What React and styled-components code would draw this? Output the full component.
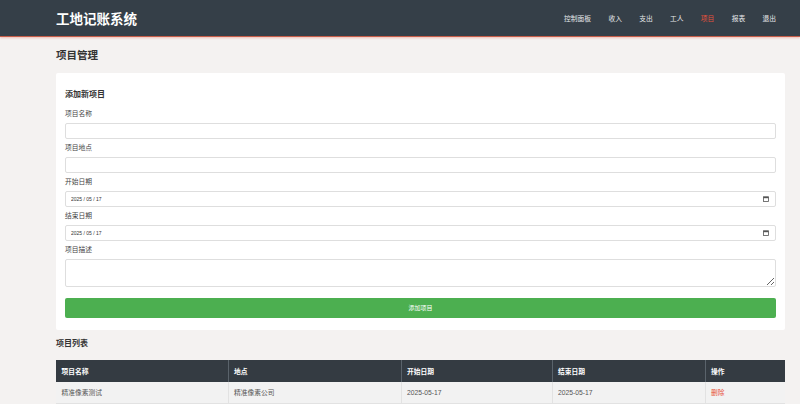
import React from 'react';
import styled, { createGlobalStyle } from 'styled-components';

const GlobalStyle = createGlobalStyle`
  html, body {
    margin: 0;
    padding: 0;
    background: #f4f2f1;
    font-family: "Liberation Sans", "Noto Sans CJK SC", sans-serif;
    color: #333;
  }
  * { box-sizing: border-box; }
`;

const NAV_ITEMS = ['控制面板', '收入', '支出', '工人', '项目', '报表', '退出'];

const COLUMNS = [
  { title: '项目名称', width: 172 },
  { title: '地点', width: 173 },
  { title: '开始日期', width: 151 },
  { title: '结束日期', width: 153 },
  { title: '操作', width: 80 },
];

const projects = [
  { name: '精准像素测试', place: '精准像素公司', start: '2025-05-17', end: '2025-05-17' },
];

// header
const TopBar = styled.header`
  height: 37px;
  background: #353f48;
  border-bottom: 1px solid #c55d48;
  box-shadow: 0 1px 2px rgba(231, 90, 70, 0.35);
  display: flex;
  align-items: center;
  justify-content: space-between;
  padding: 0 24px 0 56px;
`;

const Brand = styled.h1`
  margin: 0;
  font-size: 13.5px;
  font-weight: bold;
  color: #fff;
`;

const Nav = styled.nav`
  display: flex;
  gap: 17.3px;
`;

const NavLink = styled.a`
  font-size: 6.75px;
  color: ${(p) => (p.$active ? '#e8523c' : '#e6e8ea')};
  text-decoration: none;
`;

// page body
const Main = styled.main`
  width: 785px;
  padding: 12px 0 0 56px;
`;

const PageTitle = styled.h2`
  margin: 0 0 11px;
  font-size: 10.5px;
  line-height: 13px;
  font-weight: bold;
  color: #333;
`;

const Card = styled.section`
  background: #fff;
  padding: 17px 9px 12px;
  border-radius: 2px;
`;

const CardTitle = styled.h3`
  margin: 0 0 9px;
  font-size: 8px;
  line-height: 10px;
  font-weight: bold;
  color: #333;
`;

const Field = styled.div`
  margin-bottom: 4.5px;
`;

const Label = styled.label`
  display: block;
  font-size: 6.75px;
  line-height: 9px;
  margin-bottom: 4.5px;
  color: #444;
`;

const TextInput = styled.input`
  display: block;
  width: 100%;
  height: 16px;
  border: 1px solid #dedede;
  border-radius: 2px;
  background: #fff;
  padding: 0 5px;
  font-size: 5px;
  font-family: inherit;
  color: #333;
  outline: none;
`;

const DateBox = styled.div`
  position: relative;
`;

const CalendarIcon = styled.svg`
  position: absolute;
  right: 7px;
  top: 5px;
  width: 6px;
  height: 6px;
`;

const TextArea = styled.textarea`
  display: block;
  width: 100%;
  height: 28px;
  border: 1px solid #dedede;
  border-radius: 2px;
  padding: 3px 5px;
  font-family: inherit;
  font-size: 6px;
  resize: both;
  outline: none;
`;

const SubmitButton = styled.button`
  display: block;
  width: 100%;
  height: 20px;
  margin-top: 11px;
  background: #4caf50;
  border: none;
  border-radius: 2px;
  color: #fff;
  font-family: inherit;
  font-size: 6px;
  cursor: pointer;
`;

const SectionTitle = styled.h3`
  margin: 9px 0 11px;
  font-size: 8px;
  line-height: 10px;
  font-weight: bold;
  color: #333;
`;

const Table = styled.table`
  width: 729px;
  border-collapse: collapse;
  table-layout: fixed;
  font-size: 6.75px;
`;

const Th = styled.th`
  height: 22px;
  background: #343b42;
  color: #fff;
  font-weight: bold;
  text-align: left;
  padding: 0 5.5px;
  border-left: 1px solid #5a636b;
  &:first-child { border-left: none; }
`;

const Td = styled.td`
  height: 22px;
  background: #f2f2f2;
  color: #555;
  padding: 0 5.5px;
  border-left: 1px solid #e2e2e2;
  border-bottom: 1px solid #e2e2e2;
  &:first-child { border-left: none; }
`;

const DeleteLink = styled.a`
  color: #e8523c;
  text-decoration: none;
`;

const DateInput = ({ value }) => (
  <DateBox>
    <TextInput type="text" readOnly value={value} />
    <CalendarIcon viewBox="0 0 6 6">
      <rect x="0.5" y="0.8" width="5" height="4.7" fill="none" stroke="#555" strokeWidth="0.8" />
      <rect x="0.5" y="0.8" width="5" height="1.4" fill="#555" />
    </CalendarIcon>
  </DateBox>
);

export default function App() {
  return (
    <>
      <GlobalStyle />
      <TopBar>
        <Brand>工地记账系统</Brand>
        <Nav>
          {NAV_ITEMS.map((item) => (
            <NavLink key={item} href="#" $active={item === '项目'}>
              {item}
            </NavLink>
          ))}
        </Nav>
      </TopBar>

      <Main>
        <PageTitle>项目管理</PageTitle>

        <Card>
          <CardTitle>添加新项目</CardTitle>
          <Field>
            <Label>项目名称</Label>
            <TextInput type="text" />
          </Field>
          <Field>
            <Label>项目地点</Label>
            <TextInput type="text" />
          </Field>
          <Field>
            <Label>开始日期</Label>
            <DateInput value="2025 / 05 / 17" />
          </Field>
          <Field>
            <Label>结束日期</Label>
            <DateInput value="2025 / 05 / 17" />
          </Field>
          <Field>
            <Label>项目描述</Label>
            <TextArea />
          </Field>
          <SubmitButton type="button">添加项目</SubmitButton>
        </Card>

        <SectionTitle>项目列表</SectionTitle>
        <Table>
          <colgroup>
            {COLUMNS.map((c) => (
              <col key={c.title} style={{ width: c.width }} />
            ))}
          </colgroup>
          <thead>
            <tr>
              {COLUMNS.map((c) => (
                <Th key={c.title}>{c.title}</Th>
              ))}
            </tr>
          </thead>
          <tbody>
            {projects.map((p) => (
              <tr key={p.name}>
                <Td>{p.name}</Td>
                <Td>{p.place}</Td>
                <Td>{p.start}</Td>
                <Td>{p.end}</Td>
                <Td>
                  <DeleteLink href="#">删除</DeleteLink>
                </Td>
              </tr>
            ))}
          </tbody>
        </Table>
      </Main>
    </>
  );
}
